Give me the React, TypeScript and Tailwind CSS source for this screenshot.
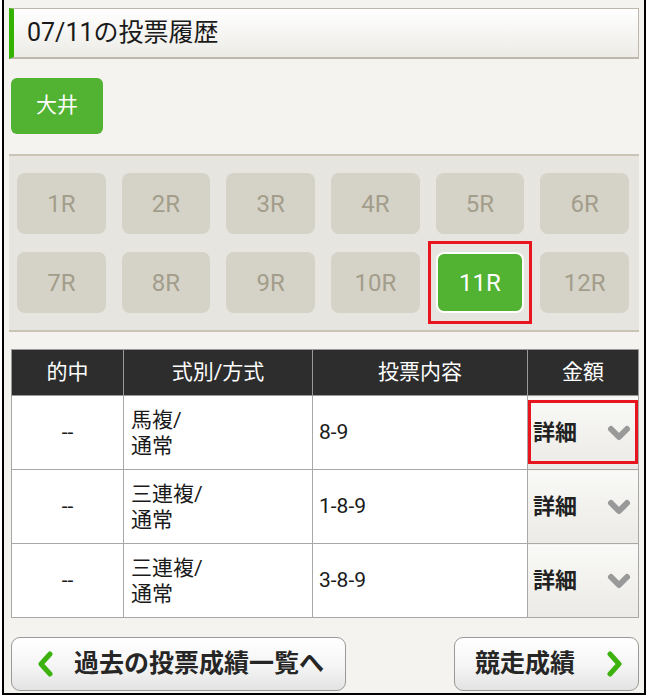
import { ChevronDown } from "lucide-react";

const races = ["1R", "2R", "3R", "4R", "5R", "6R", "7R", "8R", "9R", "10R", "11R", "12R"];

const rows = [
  { hit: "--", type: ["馬複/", "通常"], content: "8-9", marked: true },
  { hit: "--", type: ["三連複/", "通常"], content: "1-8-9", marked: false },
  { hit: "--", type: ["三連複/", "通常"], content: "3-8-9", marked: false },
];

function Chevron({ dir }: { dir: "left" | "right" }) {
  return (
    <svg width="18" height="26" viewBox="0 0 18 26" className="shrink-0">
      <path
        d={dir === "left" ? "M14 3 L5 13 L14 23" : "M4 3 L13 13 L4 23"}
        fill="none"
        stroke="#3db20f"
        strokeWidth="5"
        strokeLinecap="round"
        strokeLinejoin="round"
      />
    </svg>
  );
}

export default function App() {
  return (
    <div
      className="w-[648px] h-[697px] bg-white pl-[2px] pr-[2px] pb-[2px] overflow-hidden"
      style={{ fontFamily: '"Roboto", "Noto Sans CJK JP", sans-serif' }}
    >
      <div className="h-full border-x-2 border-b-2 border-black bg-[#f4f3ef] pl-[5px] pr-[5px] pt-[8px] flex flex-col">
        {/* title */}
        <div className="h-[51px] flex items-center border-l-[5px] border-l-[#33b300] border-y border-r border-[#bdb8ab] border-b-2 bg-gradient-to-b from-white to-[#ecebe6] pl-[13px]">
          <span className="text-[25px] text-[#1a1a1a]">07/11の投票履歴</span>
        </div>

        {/* track */}
        <div className="mt-[19px] ml-[2px] w-[92px] h-[56px] rounded-[6px] bg-[#52b232] flex items-center justify-center text-white text-[21px]">
          大井
        </div>

        {/* races */}
        <div className="mt-[20px] border-t-2 border-b-2 border-[#c9c4b6] bg-[#e6e5df] pl-[8px] pr-[10px] pt-[17px] pb-[17px] grid grid-cols-6 gap-x-[16px] gap-y-[18px]">
          {races.map((r) =>
            r === "11R" ? (
              <div key={r} className="relative">
                <div className="absolute -inset-x-[8px] -inset-y-[11px] border-[3px] border-[#e8141e]" />
                <div className="h-[61px] rounded-[8px] bg-[#52b232] border-2 border-white flex items-center justify-center text-white text-[24px]">
                  {r}
                </div>
              </div>
            ) : (
              <div
                key={r}
                className="h-[61px] rounded-[8px] bg-[#d5d3c7] flex items-center justify-center text-[#a39d8b] text-[24px]"
              >
                {r}
              </div>
            )
          )}
        </div>

        {/* table */}
        <table className="mt-[17px] ml-[2px] w-[628px] border-collapse text-[21px] text-[#1a1a1a]">
          <thead>
            <tr className="h-[46px] bg-[#2d2d2d] text-white">
              <th className="w-[112px] border border-[#999] font-normal">的中</th>
              <th className="w-[189px] border border-[#999] font-normal">式別/方式</th>
              <th className="w-[215px] border border-[#999] font-normal">投票内容</th>
              <th className="border border-[#999] font-normal">金額</th>
            </tr>
          </thead>
          <tbody>
            {rows.map((row, i) => (
              <tr key={i} className="h-[74px] bg-white">
                <td className="border border-[#a8a8a8] text-center">{row.hit}</td>
                <td className="border border-[#a8a8a8] pl-[7px] leading-[26px]">
                  {row.type[0]}
                  <br />
                  {row.type[1]}
                </td>
                <td className="border border-[#a8a8a8] pl-[6px]">{row.content}</td>
                <td className="border border-[#a8a8a8] p-0 bg-gradient-to-b from-[#f9f9f7] to-[#ebeae6]">
                  <div className="relative h-[72px] flex items-center justify-between pl-[5px] pr-[3px]">
                    {row.marked && (
                      <div className="absolute left-0 right-0 top-[3px] bottom-[5px] border-[3px] border-[#e8141e]" />
                    )}
                    <span className="text-[22px] font-semibold text-[#222]">詳細</span>
                    <ChevronDown size={32} strokeWidth={4.5} color="#999" />
                  </div>
                </td>
              </tr>
            ))}
          </tbody>
        </table>

        {/* bottom buttons */}
        <div className="mt-[19px] ml-[2px] w-[628px] flex justify-between">
          <button className="w-[335px] h-[54px] rounded-[9px] border border-[#9a9a9a] bg-gradient-to-b from-white via-[#f6f6f6] to-[#e3e3e3] flex items-center pl-[24px] gap-[20px]">
            <Chevron dir="left" />
            <span className="text-[25px] font-bold text-[#262626]">過去の投票成績一覧へ</span>
          </button>
          <button className="w-[185px] h-[54px] rounded-[9px] border border-[#9a9a9a] bg-gradient-to-b from-white via-[#f6f6f6] to-[#e3e3e3] flex items-center justify-between pl-[20px] pr-[14px]">
            <span className="text-[25px] font-bold text-[#262626]">競走成績</span>
            <Chevron dir="right" />
          </button>
        </div>
      </div>
    </div>
  );
}
